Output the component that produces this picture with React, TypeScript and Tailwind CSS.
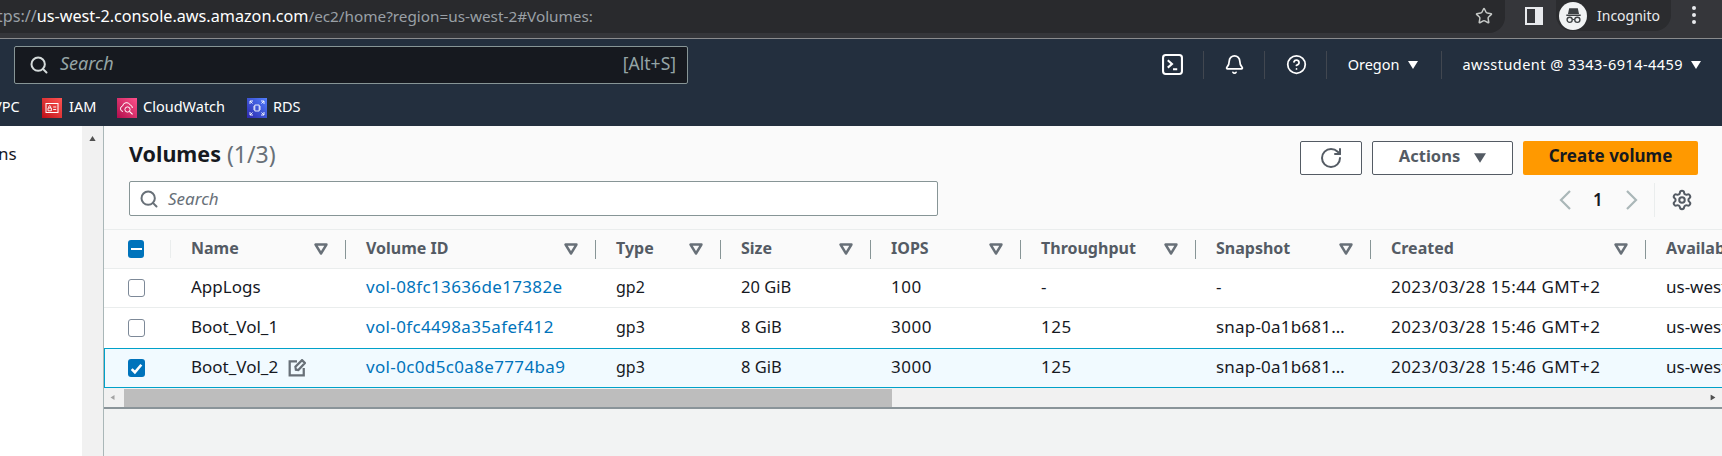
import { Bell, CircleHelp, RotateCw, Search, Settings, Star } from "lucide-react";

const COLUMNS = ["Name", "Volume ID", "Type", "Size", "IOPS", "Throughput", "Snapshot", "Created", "Availab"];

const ROWS = [
  { name: "AppLogs", id: "vol-08fc13636de17382e", type: "gp2", size: "20 GiB", iops: "100", tp: "-", snap: "-", created: "2023/03/28 15:44 GMT+2", height: "h-[39px] border-b border-[#eaeded]" },
  { name: "Boot_Vol_1", id: "vol-0fc4498a35afef412", type: "gp3", size: "8 GiB", iops: "3000", tp: "125", snap: "snap-0a1b681…", created: "2023/03/28 15:46 GMT+2", height: "h-[40px]" },
  { name: "Boot_Vol_2", id: "vol-0c0d5c0a8e7774ba9", type: "gp3", size: "8 GiB", iops: "3000", tp: "125", snap: "snap-0a1b681…", created: "2023/03/28 15:46 GMT+2", height: "h-[40px]", selected: true },
];

const GRID = "grid grid-cols-[67px_175px_250px_125px_150px_150px_175px_175px_275px_200px] w-[1742px]";

function Caret({ className }: { className: string }) {
  return (
    <svg viewBox="0 0 10 8" className={className}>
      <path d="M0 0h10L5 8z" fill="currentColor" />
    </svg>
  );
}

function FilterCaret() {
  return (
    <svg viewBox="0 0 14 12" className="h-[12px] w-[14px] text-[#687078]">
      <path d="M1.5 1.5h11L7 10.5z" fill="none" stroke="currentColor" strokeWidth="2.4" strokeLinejoin="round" />
    </svg>
  );
}

function ChromeBar() {
  return (
    <div className="flex h-[39px] shrink-0 items-start border-b border-[#8a8b8d] bg-[#35363a]">
      <div className="flex h-[33px] w-[1505px] items-center overflow-hidden rounded-br-[16px] bg-[#292a2d] pb-[1px] pr-[12px] text-[16.2px]">
        <span className="ml-[-19px] text-[#9aa0a6]">https://</span>
        <span className="text-white">us-west-2.console.aws.amazon.com</span>
        <span className="text-[15.3px] text-[#9aa0a6]">/ec2/home?region=us-west-2#Volumes:</span>
        <Star className="ml-auto h-[18px] w-[18px] text-[#c4c7c5]" strokeWidth={2} />
      </div>
      <div className="ml-[20px] mt-[7px] flex h-[18px] w-[18px] justify-end border-[2px] border-[#e8eaed]">
        <div className="h-full w-[6px] bg-[#e8eaed]" />
      </div>
      <div className="ml-[13px] flex h-[31px] w-[115px] items-center rounded-b-[16px] bg-[#2b2c2f] pl-[3px]">
        <div className="flex h-[28px] w-[28px] items-center justify-center rounded-full bg-[#f1f3f4]">
          <svg viewBox="0 0 24 24" className="h-[23px] w-[23px] text-[#3c4043]">
            <path d="M4.5 11h15v1.4h-15zM7.5 4.5h9l1.3 6H6.2z" fill="currentColor" />
            <circle cx="8" cy="16.5" r="2.7" fill="none" stroke="currentColor" strokeWidth="1.4" />
            <circle cx="16" cy="16.5" r="2.7" fill="none" stroke="currentColor" strokeWidth="1.4" />
            <path d="M10.7 16.2h2.6" stroke="currentColor" strokeWidth="1.2" />
          </svg>
        </div>
        <span className="ml-[10px] text-[14px] text-[#e8eaed]">Incognito</span>
      </div>
      <div className="ml-[21px] mt-[6px] flex flex-col gap-[3px]">
        <i className="block h-[4px] w-[4px] rounded-full bg-[#e8eaed]" />
        <i className="block h-[4px] w-[4px] rounded-full bg-[#e8eaed]" />
        <i className="block h-[4px] w-[4px] rounded-full bg-[#e8eaed]" />
      </div>
    </div>
  );
}

function NavBar() {
  return (
    <div className="flex h-[87px] shrink-0 flex-col bg-[#232f3e] text-white">
      <div className="flex h-[51px] items-center">
        <div className="ml-[14px] flex h-[38px] w-[674px] items-center rounded-[2px] border border-[#879596] bg-[#16191f] pl-[14px] pr-[11px] text-[#95a5a6]">
          <Search className="h-[20px] w-[20px] text-[#d5dbdb]" strokeWidth={2.4} />
          <span className="ml-[11px] pb-[2px] text-[18px] italic">Search</span>
          <span className="ml-auto pb-[2px] text-[17.5px]">[Alt+S]</span>
        </div>
        <div className="ml-auto flex h-[28px] items-center text-[14.5px]">
          <svg viewBox="0 0 20 20" className="h-[21px] w-[21px]">
            <rect x="1" y="1" width="18" height="18" rx="2.5" fill="none" stroke="#fff" strokeWidth="2" />
            <path d="M5.5 6l4 3.5-4 3.5M10.5 14.5h4" fill="none" stroke="#fff" strokeWidth="2" />
          </svg>
          <div className="ml-[20px] h-full w-px bg-[#414750]" />
          <Bell className="ml-[20px] h-[21px] w-[21px]" strokeWidth={2} />
          <div className="ml-[19px] h-full w-px bg-[#414750]" />
          <CircleHelp className="ml-[21px] h-[21px] w-[21px]" strokeWidth={2} />
          <div className="ml-[19px] h-full w-px bg-[#414750]" />
          <span className="ml-[21px]">Oregon</span>
          <Caret className="ml-[8px] h-[8px] w-[10px]" />
          <div className="ml-[23px] h-full w-px bg-[#414750]" />
          <span className="ml-[21px] tracking-[0.45px]">awsstudent @ 3343-6914-4459</span>
          <Caret className="ml-[8px] mr-[21px] h-[8px] w-[10px]" />
        </div>
      </div>
      <div className="flex h-[36px] items-center overflow-hidden text-[14.5px]">
        <span className="ml-[-7px] w-[49px] pb-[2px]">VPC</span>
        <div className="h-[20px] w-[20px] bg-gradient-to-tr from-[#bd0816] to-[#ff5252] p-[3px]">
          <svg viewBox="0 0 14 14" className="h-full w-full">
            <rect x="1" y="2.5" width="12" height="9" fill="none" stroke="#fff" strokeWidth="1" />
            <path d="M3 7h3.4v2.8H3zM3.8 7V5.6a.9.9 0 0 1 1.8 0V7M8.2 6h3M8.2 8.5h3" fill="none" stroke="#fff" strokeWidth="0.9" />
          </svg>
        </div>
        <span className="ml-[7px] w-[26px] pb-[2px]">IAM</span>
        <div className="ml-[22px] h-[20px] w-[20px] bg-gradient-to-tr from-[#b0084d] to-[#ff4f8b] p-[2px]">
          <svg viewBox="0 0 16 16" className="h-full w-full">
            <path d="M4 11.5a2.8 2.8 0 0 1-.4-5.5 4 4 0 0 1 7.6-1 3 3 0 0 1 2.2 3" fill="none" stroke="#fff" strokeWidth="1" />
            <circle cx="8.5" cy="9.5" r="2.6" fill="none" stroke="#fff" strokeWidth="1" />
            <path d="M10.4 11.4l3.2 3" stroke="#fff" strokeWidth="1.2" />
          </svg>
        </div>
        <span className="ml-[6px] w-[82px] pb-[2px]">CloudWatch</span>
        <div className="ml-[22px] h-[20px] w-[20px] bg-gradient-to-tr from-[#2e27ad] to-[#527fff] p-[2px]">
          <svg viewBox="0 0 16 16" className="h-full w-full">
            <path d="M5.8 5h4.4v6H5.8zM4 7h1.8M4 9h1.8M10.2 7H12M10.2 9H12" fill="none" stroke="#fff" strokeWidth="0.9" />
            <path d="M1 4V1h3M12 1h3v3M15 12v3h-3M4 15H1v-3M1 1l2.5 2.5M15 1l-2.5 2.5M15 15l-2.5-2.5M1 15l2.5-2.5" fill="none" stroke="#fff" strokeWidth="0.9" />
          </svg>
        </div>
        <span className="ml-[6px] pb-[2px]">RDS</span>
      </div>
    </div>
  );
}

function Checkbox({ state }: { state: "off" | "on" | "mixed" }) {
  if (state === "off") {
    return <div className="h-[18px] w-[17px] rounded-[3px] border border-[#7d8998] bg-white" />;
  }
  return (
    <div className="flex h-[18px] w-[17px] items-center justify-center rounded-[3px] bg-[#0073bb]">
      {state === "mixed" ? (
        <div className="h-[2px] w-[11px] bg-white" />
      ) : (
        <svg viewBox="0 0 14 14" className="h-[15px] w-[15px]">
          <path d="M2.5 7.5l3 3 6-7" fill="none" stroke="#fff" strokeWidth="2.4" />
        </svg>
      )}
    </div>
  );
}

function VolumesTable() {
  return (
    <div className="mt-[12px] overflow-hidden border-t border-[#eaeded]">
      <div className={`${GRID} h-[39px] border-b border-[#eaeded] text-[16px] font-bold text-[#545b64]`}>
        <div className="flex items-center pl-[24px]">
          <Checkbox state="mixed" />
          <div className="ml-[26px] h-[18px] w-px bg-[#eaeded]" />
        </div>
        {COLUMNS.map((col, i) => (
          <div key={col} className="flex items-center pl-[20px]">
            <span className="pb-[2px]">{col}</span>
            {i < 8 && (
              <>
                <span className="ml-auto mr-[17px]">
                  <FilterCaret />
                </span>
                <div className="h-[19px] w-px bg-[#879596]" />
              </>
            )}
          </div>
        ))}
      </div>
      {ROWS.map((row) => (
        <div
          key={row.id}
          className={`${GRID} ${row.height} text-[17px] text-[#16191f] ${
            row.selected ? "bg-[#f1faff] ring-1 ring-inset ring-[#00a1c9]" : "bg-white"
          }`}
        >
          <div className="flex items-center pl-[24px]">
            <Checkbox state={row.selected ? "on" : "off"} />
          </div>
          <div className="flex items-center pl-[20px]">
            <span className="pb-[2px]">{row.name}</span>
            {row.selected && (
              <svg viewBox="0 0 16 16" className="ml-[10px] h-[18px] w-[18px] text-[#687078]">
                <path d="M8 2H1.5v12.5H14V8M7 9.5l-.4-2.6L12.5 1 15 3.5 9.2 9.8z" fill="none" stroke="currentColor" strokeWidth="2" />
              </svg>
            )}
          </div>
          <div className="flex items-center pb-[2px] pl-[20px] tracking-[0.35px] text-[#0073bb]">{row.id}</div>
          <div className="flex items-center pb-[2px] pl-[20px] text-[16px]">{row.type}</div>
          <div className="flex items-center pb-[2px] pl-[20px] text-[16.5px]">{row.size}</div>
          <div className="flex items-center pb-[2px] pl-[20px] tracking-[0.5px]">{row.iops}</div>
          <div className="flex items-center pb-[2px] pl-[20px] tracking-[0.5px]">{row.tp}</div>
          <div className="flex items-center pb-[2px] pl-[20px] tracking-[0.2px]">{row.snap}</div>
          <div className="flex items-center pb-[2px] pl-[20px] tracking-[0.45px]">{row.created}</div>
          <div className="flex items-center pb-[2px] pl-[20px]">us-west-2a</div>
        </div>
      ))}
      <div className="flex h-[21px] items-center border-b-2 border-[#8a9499] bg-[#f1f1f1]">
        <Caret className="ml-[6px] h-[9px] w-[5px] rotate-90 text-[#a3a3a3]" />
        <div className="ml-[9px] h-[18px] w-[768px] bg-[#bdbdbd]" />
        <Caret className="ml-auto mr-[6px] h-[9px] w-[6px] -rotate-90 text-[#505050]" />
      </div>
    </div>
  );
}

export default function App() {
  return (
    <div className="flex h-[456px] w-[1722px] flex-col overflow-hidden bg-white font-['Noto_Sans',sans-serif]">
      <ChromeBar />
      <NavBar />
      <div className="flex min-h-0 flex-1">
        <div className="w-[82px] shrink-0 bg-white pt-[15px] text-[17px] text-[#16191f]">
          <span className="ml-[-2px]">ns</span>
        </div>
        <div className="flex w-[22px] shrink-0 justify-center border-r border-[#aab7b8] bg-[#f1f1f1] pt-[10px]">
          <Caret className="h-[5px] w-[9px] rotate-180 text-[#505050]" />
        </div>
        <div className="min-w-0 flex-1 bg-[#f2f3f3]">
          <div className="bg-[#fafafa]">
            <div className="flex justify-between pl-[25px] pr-[24px] pt-[15px]">
              <div>
                <div className="flex h-[27px] items-center text-[21.5px]">
                  <span className="font-bold text-[#16191f]">Volumes</span>
                  <span className="ml-[6px] text-[23px] text-[#687078]">(1/3)</span>
                </div>
                <div className="mt-[13px] flex h-[35px] w-[809px] items-center rounded-[2px] border border-[#879596] bg-white pl-[9px] text-[#687078]">
                  <Search className="h-[20px] w-[20px]" strokeWidth={2.4} />
                  <span className="ml-[9px] text-[17px] italic">Search</span>
                </div>
              </div>
              <div className="flex flex-col items-end">
                <div className="flex gap-[10px]">
                  <div className="flex h-[34px] w-[62px] items-center justify-center rounded-[2px] border border-[#545b64] bg-white">
                    <RotateCw className="h-[24px] w-[24px] text-[#545b64]" strokeWidth={2} />
                  </div>
                  <div className="flex h-[34px] w-[141px] items-center justify-center rounded-[2px] border border-[#545b64] bg-white pb-[4px] text-[16.5px] font-bold text-[#545b64]">
                    Actions
                    <Caret className="ml-[14px] mt-[4px] h-[10px] w-[12px]" />
                  </div>
                  <div className="flex h-[34px] w-[175px] items-center justify-center rounded-[2px] bg-[#ff9900] pb-[4px] text-[17px] font-bold text-[#16191f]">
                    Create volume
                  </div>
                </div>
                <div className="mt-[8px] flex h-[34px] items-center">
                  <svg viewBox="0 0 14 22" className="h-[22px] w-[14px] text-[#aab7b8]">
                    <path d="M12 2L3 11l9 9" fill="none" stroke="currentColor" strokeWidth="2.2" />
                  </svg>
                  <span className="ml-[21px] w-[8px] text-[17px] font-semibold text-[#16191f]">1</span>
                  <svg viewBox="0 0 14 22" className="ml-[24px] h-[22px] w-[14px] text-[#aab7b8]">
                    <path d="M2 2l9 9-9 9" fill="none" stroke="currentColor" strokeWidth="2.2" />
                  </svg>
                  <div className="ml-[15px] h-full w-px bg-[#eaeded]" />
                  <Settings className="ml-[16px] mr-[5px] h-[22px] w-[22px] text-[#545b64]" strokeWidth={2.2} />
                </div>
              </div>
            </div>
            <VolumesTable />
          </div>
        </div>
      </div>
    </div>
  );
}
